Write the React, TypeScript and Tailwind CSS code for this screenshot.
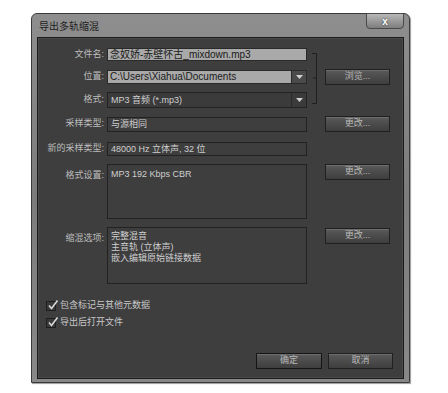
import React from 'react';

const FONT = { fontFamily: '"Liberation Sans", "Noto Sans CJK SC", sans-serif' };

function Btn({ label, w = 'w-[65px]', dark = false }: { label: string; w?: string; dark?: boolean }) {
  return (
    <div
      className={`${w} h-[16px] flex items-center justify-center border ${dark ? 'border-[#151515]' : 'border-[#202020]'} bg-gradient-to-b from-[#5a5a5a] to-[#3e3e3e] text-[9px] text-[#b8b8b8] shadow-[inset_0_1px_0_rgba(255,255,255,0.12)]`}
    >
      {label}
    </div>
  );
}

function Label({ children, top = false }: { children: React.ReactNode; top?: boolean }) {
  return (
    <div className={`w-[69px] pr-[3px] text-right text-[9px] text-[#bdbdbd] ${top ? 'pt-[5px]' : ''}`}>{children}</div>
  );
}

function Arrow() {
  return (
    <svg width="7" height="4" viewBox="0 0 7 4">
      <path d="M0 0H7L3.5 4Z" fill="#cfcfcf" />
    </svg>
  );
}

function Check({ text }: { text: string }) {
  return (
    <div className="flex items-center gap-[4px] h-[11px]">
      <div className="w-[10px] h-[10px] border border-[#1e1e1e] bg-[#3a3a3a] relative">
        <svg className="absolute -top-[3px] left-0" width="12" height="12" viewBox="0 0 12 12">
          <path d="M2 6.5L4.5 9.5L10.5 1.5" stroke="#d8d8d8" strokeWidth="1.6" fill="none" />
        </svg>
      </div>
      <span className="text-[9px] text-[#c8c8c8]">{text}</span>
    </div>
  );
}

export default function App() {
  return (
    <div className="w-[448px] h-[393px] bg-white pt-[13px] pl-[31px]" style={FONT}>
      <div className="w-[379px] h-[370px] rounded-t-[6px] border border-[#3a3a3a] bg-gradient-to-b from-[#8e8e8e] via-[#7c7c7c] to-[#888888] px-[5px] pb-[3px] flex flex-col shadow-[1px_1px_1px_rgba(0,0,0,0.4)]">
        {/* title bar */}
        <div className="h-[23px] flex items-start justify-between shrink-0">
          <span className="pt-[5px] pl-[2px] text-[10px] text-[#1e1e1e]">导出多轨缩混</span>
          <div className="w-[38px] h-[16px] mt-[-1px] rounded-b-[4px] border border-[#4a4a4a] bg-gradient-to-b from-[#b8b8b8] to-[#7e7e7e] flex items-center justify-center text-[10px] font-bold text-white [text-shadow:0_0_2px_#333]">
            x
          </div>
        </div>

        {/* body */}
        <div className="flex-1 border border-[#1c1c1c] bg-[#3e3e3e] shadow-[inset_0_0_0_1px_#4a4a4a] pt-[10px] flex flex-col">
          {/* file / location / format */}
          <div className="flex items-start">
            <div className="flex flex-col">
              <div className="flex items-center h-[13px]">
                <Label>文件名:</Label>
                <div className="w-[200px] h-[13px] bg-[#a9a9a9] border border-[#2a2a2a] px-[2px] text-[10px] leading-[11px] text-[#1a1a1a]">
                  念奴娇-赤壁怀古_mixdown.mp3
                </div>
              </div>
              <div className="flex items-center h-[14px] mt-[9px]">
                <Label>位置:</Label>
                <div className="w-[200px] h-[14px] flex border border-[#2a2a2a]">
                  <div className="flex-1 bg-[#a9a9a9] px-[2px] text-[10px] leading-[12px] text-[#1a1a1a]">C:\Users\Xiahua\Documents</div>
                  <div className="w-[15px] bg-[#4a4a4a] border-l border-[#2a2a2a] flex items-center justify-center"><Arrow /></div>
                </div>
              </div>
              <div className="flex items-center h-[16px] mt-[8px]">
                <Label>格式:</Label>
                <div className="w-[200px] h-[16px] flex border border-[#232323] bg-[#3b3b3b]">
                  <div className="flex-1 px-[3px] text-[9px] leading-[14px] text-[#d0d0d0]">MP3 音频 (*.mp3)</div>
                  <div className="w-[15px] border-l border-[#2a2a2a] flex items-center justify-center"><Arrow /></div>
                </div>
              </div>
            </div>
            <svg className="mt-[5px] ml-[5px]" width="6" height="51" viewBox="0 0 6 51">
              <path d="M0 0.5H4.5V50.5H0M4.5 25H1" stroke="#202020" strokeWidth="1" fill="none" />
            </svg>
            <div className="ml-[7px] mt-[21px]">
              <Btn label="浏览..." />
            </div>
          </div>

          {/* sample type */}
          <div className="flex items-center mt-[8px]">
            <Label>采样类型:</Label>
            <div className="w-[200px] h-[15px] border border-[#222] px-[3px] text-[9px] leading-[13px] text-[#cfcfcf]">与源相同</div>
            <div className="ml-[18px]"><Btn label="更改..." /></div>
          </div>

          <div className="flex items-center mt-[10px]">
            <Label>新的采样类型:</Label>
            <div className="w-[200px] h-[14px] border border-[#222] px-[3px] text-[9px] leading-[12px] text-[#cfcfcf]">48000 Hz 立体声, 32 位</div>
          </div>

          <div className="flex items-start mt-[8px]">
            <Label top>格式设置:</Label>
            <div className="w-[200px] h-[55px] border border-[#222] px-[3px] pt-[3px] text-[9px] text-[#cfcfcf]">MP3 192 Kbps CBR</div>
            <div className="ml-[18px]"><Btn label="更改..." /></div>
          </div>

          <div className="flex items-start mt-[8px]">
            <Label top>缩混选项:</Label>
            <div className="w-[200px] h-[57px] border border-[#222] px-[3px] pt-[3px] text-[9px] leading-[11px] text-[#cfcfcf]">
              <div>完整混音</div>
              <div>主音轨 (立体声)</div>
              <div>嵌入编辑原始链接数据</div>
            </div>
            <div className="ml-[18px] mt-[1px]"><Btn label="更改..." /></div>
          </div>

          <div className="flex flex-col gap-[6px] pl-[8px] mt-[16px]">
            <Check text="包含标记与其他元数据" />
            <Check text="导出后打开文件" />
          </div>

          <div className="flex justify-end gap-[6px] pr-[10px] mt-[25px]">
            <Btn label="确定" w="w-[66px]" dark />
            <Btn label="取消" w="w-[65px]" />
          </div>
        </div>
      </div>
    </div>
  );
}
